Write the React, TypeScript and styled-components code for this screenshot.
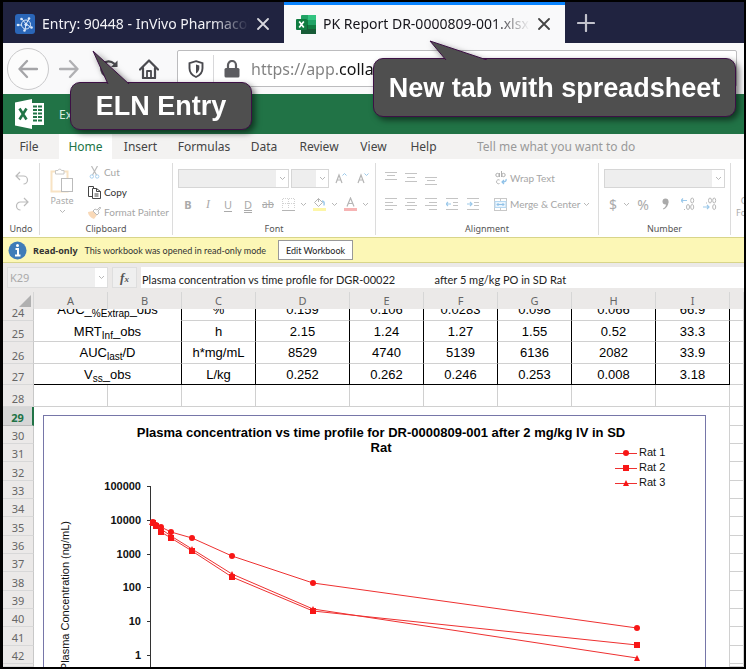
import React from "react";
import styled, { createGlobalStyle, css } from "styled-components";

const UI = '"Noto Sans", "Open Sans", sans-serif';
const NARROW = 'Lato, "Noto Sans", sans-serif';
const ARIAL = '"Liberation Sans", Arial, sans-serif';

const GlobalStyle = createGlobalStyle`
  *, *::before, *::after { box-sizing: border-box; }
  body { margin: 0; background: #000; font-family: ${UI}; }
  button, input { font: inherit; color: inherit; margin: 0; }
  svg { display: block; flex: none; }
`;

const Frame = styled.main`
  position: relative;
  min-height: 100vh;
  border: solid #000;
  border-width: 2px 2px 2px 3px;
  background: #fff;
  overflow: hidden;
`;

const PlainButton = styled.button`
  display: flex;
  align-items: center;
  justify-content: center;
  padding: 0;
  border: 0;
  background: none;
  flex: none;
`;

/* Browser tabs */
const TabStrip = styled.div`
  display: flex;
  height: 41px;
  background: #202340;
`;

const Tab = styled.div<{ $active?: boolean }>`
  display: flex;
  align-items: center;
  width: 281px;
  flex: none;
  padding: 0 15px 0 12px;
  color: ${(p) => (p.$active ? "#15141a" : "#f2f2f6")};
  background: ${(p) => (p.$active ? "#f9f9fa" : "#202340")};
  border-top: 3px solid ${(p) => (p.$active ? "#0a84ff" : "#202340")};
`;

const TabTitle = styled.span`
  flex: 1;
  min-width: 0;
  margin: 0 8px 0 7px;
  font-size: 14px;
  line-height: 20px;
  white-space: nowrap;
  overflow: hidden;
  mask-image: linear-gradient(90deg, #000 82%, transparent);
`;

const NewTab = styled(PlainButton)`
  width: 42px;
`;

/* Navigation bar */
const NavBar = styled.div`
  display: flex;
  align-items: center;
  height: 51px;
  padding: 0 7px 0 4px;
  background: #f9f9fa;
`;

const BackButton = styled(PlainButton)`
  width: 42px;
  height: 42px;
  border: 1px solid #c9c9cb;
  border-radius: 50%;
  background: #fcfcfc;
`;

const NavButton = styled(PlainButton)`
  width: 40px;
  height: 36px;
`;

const AddressBar = styled.div`
  display: flex;
  flex: 1;
  align-items: center;
  height: 37px;
  margin-left: 8px;
  border: 1px solid #bcbcbe;
  border-radius: 2px;
  background: #fff;
`;

const ShieldBox = styled.div`
  display: flex;
  justify-content: center;
  width: 36px;
  height: 28px;
  align-items: center;
  border-right: 1px solid #d8d8da;
`;

const AddressInput = styled.input`
  flex: 1;
  min-width: 0;
  margin-left: 11px;
  padding: 0;
  border: 0;
  outline: 0;
  font-size: 16px;
  line-height: 24px;
  color: transparent;
  background: linear-gradient(90deg, #808080 89px, #111 89px);
  background-clip: text;
`;

/* Application header and menu */
const AppHeader = styled.header`
  display: flex;
  align-items: center;
  gap: 14px;
  height: 40px;
  padding-left: 12px;
  background: #217346;
  color: #d9eee1;
  font-size: 12px;
`;

const MenuBar = styled.nav`
  display: flex;
  height: 25px;
  background: #f3f2f1;
`;

const MenuTab = styled.button<{ $w: number; $active?: boolean }>`
  width: ${(p) => p.$w}px;
  flex: none;
  padding: 0;
  border: 0;
  font-size: 12px;
  line-height: 24px;
  white-space: nowrap;
  background: ${(p) => (p.$active ? "#fff" : "transparent")};
  color: ${(p) => (p.$active ? "#217346" : "#444")};
  &:first-child { margin-right: 4px; }
`;

const TellMe = styled.input`
  flex: 1;
  min-width: 0;
  margin-left: 28px;
  padding: 0;
  border: 0;
  background: none;
  font-size: 12px;
  &::placeholder { color: #999; opacity: 1; }
`;

/* Ribbon */
const Ribbon = styled.div`
  display: grid;
  grid-template-columns: 37px 133px 203px 223px 132px 1fr;
  height: 78px;
  padding: 4px 0;
  overflow: hidden;
`;

const Group = styled.section`
  display: flex;
  flex-direction: column;
  border-right: 1px solid #dcdcdc;
  min-width: 0;
  &:last-child { border-right: 0; }
`;

const GroupBody = styled.div<{ $row?: boolean }>`
  display: flex;
  flex-direction: ${(p) => (p.$row ? "row" : "column")};
  height: 60px;
  padding: 4px 0 0 5px;
  gap: ${(p) => (p.$row ? "9px" : "4px")};
`;

const GroupLabel = styled.div`
  font-size: 9px;
  line-height: 12px;
  text-align: center;
  color: #555;
`;

const ToolRow = styled.div<{ $gap?: number }>`
  display: flex;
  align-items: center;
  height: 22px;
  gap: ${(p) => p.$gap ?? 0}px;
`;

const Tool = styled(PlainButton)<{ $w?: number }>`
  width: ${(p) => p.$w ?? 20}px;
  height: 20px;
`;

const UndoTool = styled(Tool)`
  width: 28px;
  height: 26px;
`;

const Money = styled(Tool)`
  font-size: 14px;
  color: #aaa;
`;

const Letter = styled(Tool)<{ $kind?: "b" | "i" | "u" | "d" | "s" }>`
  font-size: 11px;
  color: #aaa;
  ${(p) => p.$kind === "b" && css`font-weight: 700;`}
  ${(p) => p.$kind === "i" && css`font-style: italic; font-family: "Liberation Serif", serif; font-size: 12px;`}
  ${(p) => p.$kind === "u" && css`text-decoration: underline; text-underline-offset: 2px;`}
  ${(p) => p.$kind === "d" && css`text-decoration: underline double; text-underline-offset: 1px;`}
  ${(p) => p.$kind === "s" && css`text-decoration: line-through; font-size: 10px;`}
`;

const LabelTool = styled.button<{ $on?: boolean }>`
  display: flex;
  align-items: center;
  gap: 3px;
  height: 20px;
  padding: 0;
  border: 0;
  background: none;
  font-family: ${NARROW};
  font-size: 10px;
  line-height: 14px;
  white-space: nowrap;
  color: ${(p) => (p.$on ? "#333" : "#a6a6a6")};
`;

const PasteTool = styled.button`
  display: flex;
  flex-direction: column;
  align-items: center;
  width: 34px;
  height: 54px;
  padding: 0;
  border: 0;
  background: none;
  font-size: 9px;
  line-height: 16px;
  color: #aaa;
`;

const CommandList = styled.div`
  display: flex;
  flex-direction: column;
  margin-top: -5px;
`;

const Combo = styled.span<{ $w: number }>`
  display: flex;
  width: ${(p) => p.$w}px;
  height: 19px;
  border: 1px solid #d6d6d6;
  background: #eee;
`;

const ComboInput = styled.input`
  flex: 1;
  min-width: 0;
  padding: 0;
  border: 0;
  background: none;
`;

const ComboArrow = styled(PlainButton)`
  width: 12px;
  background: #fff;
`;

const Spacer = styled.span<{ $w: number }>`
  width: ${(p) => p.$w}px;
  flex: none;
`;

const CutOff = styled.div`
  padding: 32px 0 0 5px;
  font-size: 9px;
  line-height: 12px;
  white-space: nowrap;
  color: #aaa;
`;

/* Read-only notice */
const Notice = styled.div`
  display: flex;
  align-items: center;
  height: 26px;
  padding-left: 5px;
  border: solid #d8d58a;
  border-width: 1px 0;
  background: #fcf7b6;
  font-family: ${NARROW};
  font-size: 9px;
  color: #333;
  white-space: nowrap;
`;

const NoticeTitle = styled.strong`
  margin: 0 7px 0 6px;
  font-family: ${UI};
`;

const EditButton = styled.button`
  width: 75px;
  height: 20px;
  margin-left: 12px;
  padding: 0;
  border: 1px solid #999;
  background: #fff;
  color: #222;
`;

/* Formula bar */
const FormulaBar = styled.div`
  display: flex;
  height: 29px;
  padding: 4px 0 4px 4px;
  gap: 4px;
  background: #ebe9e8;
`;

const NameBox = styled.span`
  display: flex;
  width: 101px;
  border: 1px solid #dedede;
  background: #efefef;
  color: #aaa;
  font-size: 11px;
`;

const NameInput = styled(ComboInput)`
  padding-left: 2px;
`;

const FxButton = styled(PlainButton)`
  width: 25px;
  border: 1px solid #dedede;
  background: #efefef;
  font: italic 700 13px "Liberation Serif", serif;
  color: #555;
  small { font-size: 9px; padding-top: 3px; }
`;

const FormulaInput = styled.input`
  flex: 1;
  min-width: 0;
  padding: 3px 0 0 1px;
  border: 0;
  background: #fff;
  font-family: ${NARROW};
  font-size: 11px;
  color: #222;
`;

/* Sheet */
const Sheet = styled.table`
  width: 100%;
  table-layout: fixed;
  border-collapse: separate;
  border-spacing: 0;
  font-family: ${ARIAL};
  font-size: 13px;
  line-height: 15px;
  color: #000;
  td, th { padding: 0; overflow: hidden; white-space: nowrap; }
`;

const Row = styled.tr<{ $h: number }>`
  height: ${(p) => p.$h}px;
`;

const ColHead = styled.th`
  border-right: 1px solid #d6d6d6;
  background: #ebe9e8;
  font-family: ${UI};
  font-size: 11px;
  font-weight: 400;
  color: #666;
`;

const RowHead = styled.th<{ $active?: boolean }>`
  vertical-align: bottom;
  border-right: ${(p) => (p.$active ? "2px solid #217346" : "1px solid #c8c8c8")};
  border-bottom: 1px solid ${(p) => (p.$active ? "#bbb" : "#d8d8d8")};
  background: ${(p) => (p.$active ? "#d6d6d6" : "#ebe9e8")};
  color: ${(p) => (p.$active ? "#217346" : "#666")};
  font-family: ${UI};
  font-size: 11px;
  line-height: 14px;
  font-weight: ${(p) => (p.$active ? 700 : 400)};
`;

const Cell = styled.td<{ $data?: boolean; $last?: boolean; $open?: boolean }>`
  text-align: center;
  border-right: 1px solid ${(p) => (p.$data ? "#000" : "#d0d0d0")};
  border-bottom: 1px solid ${(p) => (p.$last ? "#000" : p.$open ? "#fff" : "#d0d0d0")};
`;

const Clip = styled.div<{ $lift?: boolean }>`
  display: flex;
  align-items: flex-end;
  justify-content: center;
  height: 11px;
  padding-bottom: ${(p) => (p.$lift ? "3px" : 0)};
  overflow: hidden;
`;

const CellText = styled.span`
  display: block;
  sub { font-size: 10px; line-height: 0; vertical-align: -3px; }
`;

const ChartCell = styled.td`
  && { padding: 8px 23px 0 9px; }
  vertical-align: top;
  border-right: 1px solid #d0d0d0;
`;

const ChartFrame = styled.div`
  border: solid #7676a8;
  border-width: 1px 1px 0;
  overflow: hidden;
`;

/* Callouts lie over the browser and the ribbon */
const Callout = styled.aside<{ $x: number; $y: number; $w: number; $h: number }>`
  position: absolute;
  left: ${(p) => p.$x}px;
  top: ${(p) => p.$y}px;
  width: ${(p) => p.$w}px;
  height: ${(p) => p.$h}px;
  display: flex;
  align-items: center;
  justify-content: center;
  border: 1px solid #3d1045;
  border-radius: 10px;
  background: #4f4f4f;
  color: #fff;
  font-family: ${ARIAL};
  font-weight: 700;
  font-size: 27px;
  line-height: 32px;
  white-space: nowrap;
  filter: drop-shadow(3px 3px 3px rgba(0, 0, 0, 0.55));
`;

const Tail = styled.svg<{ $x: number }>`
  position: absolute;
  left: ${(p) => p.$x}px;
  bottom: calc(100% - 1px);
`;

const Chevron = () => (
  <svg width="7" height="5" viewBox="0 0 7 5" fill="none" stroke="#b8b8b8">
    <path d="M1 1l2.5 2.5L6 1" />
  </svg>
);

const ElnIcon = () => (
  <svg width="20" height="20" viewBox="0 0 20 20">
    <rect width="20" height="20" rx="3" fill="#2a66b8" />
    <g fill="none" stroke="#dce9fb" strokeWidth="1">
      <circle cx="11" cy="10.500" r="4.500" />
      <circle cx="11" cy="10.500" r="1.200" fill="#dce9fb" />
      <path d="M4 11h3M11 10L7 5M11 10l3-5M11 10l4.500 3M11 10l-1 6" />
    </g>
    <g fill="#dce9fb">
      <circle cx="3" cy="11" r="1.300" /><circle cx="6.500" cy="5" r="1.300" />
      <circle cx="14" cy="4.500" r="1.300" /><circle cx="16.500" cy="13.500" r="1.300" /><circle cx="9.500" cy="16.500" r="1.300" />
    </g>
  </svg>
);

const XlsxIcon = () => (
  <svg width="20" height="19" viewBox="0 0 20 19">
    <rect x="5" y="0" width="15" height="19" rx="1" fill="#21a366" />
    <rect x="12" y="0" width="8" height="5" fill="#33c481" />
    <rect x="5" y="5" width="7" height="5" fill="#107c41" />
    <rect x="5" y="10" width="15" height="9" fill="#185c37" />
    <rect x="12" y="10" width="8" height="4" fill="#107c41" />
    <rect x="0" y="4" width="11" height="11" rx="1" fill="#107c41" />
    <path d="M3.200 6.500l4.600 6M7.800 6.500l-4.600 6" stroke="#fff" strokeWidth="1.700" />
  </svg>
);

const Close = ({ color }: { color: string }) => (
  <svg width="12" height="12" viewBox="0 0 12 12" stroke={color} strokeWidth="1.800" strokeLinecap="round">
    <path d="M1 1l10 10M11 1L1 11" />
  </svg>
);

const Arrow = ({ color, back }: { color: string; back?: boolean }) => (
  <svg width="20" height="20" viewBox="0 0 20 20" fill="none" stroke={color} strokeWidth="2.300" strokeLinecap="round" strokeLinejoin="round">
    <path d={back ? "M19 10H1.500M9 2L1.500 10l7.500 8" : "M1 10h17.500M11 2l7.500 8-7.500 8"} />
  </svg>
);

const Reload = () => (
  <svg width="20" height="20" viewBox="0 0 20 20" fill="none" stroke="#4a4a4f" strokeWidth="2.200">
    <path d="M16.500 13A7.500 7.500 0 1 1 15 4.500L17.500 7" />
    <path d="M18.500 1.500v6.500h-6.500z" fill="#4a4a4f" stroke="none" />
  </svg>
);

const HomeIcon = () => (
  <svg width="20" height="20" viewBox="0 0 20 20" fill="none" stroke="#4a4a4f" strokeWidth="2.200" strokeLinejoin="round" strokeLinecap="round">
    <path d="M1 10.500L10 1.500l9 9M4 9v10h12V9" />
    <path d="M8 18.500V12h4v6.500" strokeWidth="1.800" />
  </svg>
);

const Shield = () => (
  <svg width="16" height="18" viewBox="0 0 16 18">
    <path d="M8 1.200l6.500 2v5c0 4-2.500 7-6.500 8.800C4 15.200 1.500 12.200 1.500 8.200v-5z" fill="none" stroke="#4a4a4f" strokeWidth="1.900" />
    <path d="M8 4.500v9c2.200-1.300 3.300-3.200 3.300-5.500V5.400z" fill="#4a4a4f" />
  </svg>
);

const Lock = () => (
  <svg width="16" height="18" viewBox="0 0 16 18">
    <rect x="0.500" y="8" width="15" height="9.500" rx="1.500" fill="#5c5c60" />
    <path d="M4 8V5a4 4 0 0 1 8 0v3" fill="none" stroke="#5c5c60" strokeWidth="2.200" />
  </svg>
);

const ExcelLogo = () => (
  <svg width="30" height="30" viewBox="0 0 30 30">
    <path d="M16 4h13v22H16z" fill="#fff" />
    <path d="M18 7.500h9M18 11h9M18 14.500h9M18 18h9M18 21.500h9" stroke="#217346" strokeWidth="2" />
    <path d="M22.500 5v20" stroke="#fff" strokeWidth="1" />
    <path d="M0 3.500L17 0v30L0 26.500z" fill="#fff" />
    <path d="M4.500 9.500l7 11M11.500 9.500l-7 11" stroke="#217346" strokeWidth="2.600" />
  </svg>
);

const UndoIcon = ({ redo }: { redo?: boolean }) => (
  <svg width="14" height="14" viewBox="0 0 14 14" fill="none" stroke="#bbb" strokeWidth="1.200">
    <path d={redo ? "M9 1l4 4-4 4M13 5H5.500a4 4 0 0 0 0 8" : "M5 1L1 5l4 4M1 5h7.500a4 4 0 0 1 0 8"} />
  </svg>
);

const PasteIcon = () => (
  <svg width="24" height="26" viewBox="0 0 24 26" fill="none">
    <rect x="1.500" y="4.500" width="16" height="20" stroke="#f8e3c4" strokeWidth="2" />
    <path d="M5.500 7V3.500H8a1.800 1.800 0 0 1 3.500 0H14V7z" fill="#fff" stroke="#c8c8c8" />
    <rect x="11.500" y="11.500" width="11" height="13" fill="#fff" stroke="#bbb" />
  </svg>
);

const CutIcon = () => (
  <svg width="13" height="13" viewBox="0 0 13 13" fill="none">
    <path d="M3.500 0l5 9M9.500 0l-5 9" stroke="#bbb" strokeWidth="1.200" />
    <circle cx="3.800" cy="10.500" r="1.700" stroke="#a9d0ee" />
    <circle cx="9.200" cy="10.500" r="1.700" stroke="#a9d0ee" />
  </svg>
);

const CopyIcon = () => (
  <svg width="13" height="13" viewBox="0 0 13 13" fill="none" stroke="#444">
    <path d="M4.500 10.500h-4V.5h5v2M4.500 2.500h4l4 3v7h-8zM8.500 2.500v3h4M6.500 8h4M6.500 10h4" />
  </svg>
);

const PainterIcon = () => (
  <svg width="13" height="13" viewBox="0 0 13 13">
    <path d="M0 6l5-1 4 4-3 4C3 12 0 9 0 6z" fill="#f9d9b8" />
    <path d="M5 5l2-2 2 1 3-3 .8.800L10 5l1 2-2 2z" fill="#fff" stroke="#bbb" />
  </svg>
);

const SizeIcon = ({ down }: { down?: boolean }) => (
  <svg width="12" height="13" viewBox="0 0 12 13" fill="none">
    <path d="M1 11l3-8 3 8M2 8h4" stroke="#b5b5b5" strokeWidth="1.200" />
    <path d={down ? "M7.500 1.500l2 2 2-2" : "M7.500 3.500l2-2 2 2"} stroke="#9cc9ea" />
  </svg>
);

const BorderIcon = () => (
  <svg width="13" height="13" viewBox="0 0 13 13" fill="none" stroke="#d2d2d2">
    <path d="M.5 1v10M6.500 1v10M12.500 1v10M1 .5h11M1 5.500h11" strokeDasharray="1 1" />
    <path d="M0 12.500h13" stroke="#b5b5b5" />
  </svg>
);

const FillIcon = () => (
  <svg width="13" height="14" viewBox="0 0 13 14" fill="none">
    <path d="M5.500 1.500l4 4-4 4-4-4zM5.500 1.500V5" stroke="#b5b5b5" />
    <path d="M9 4c2 0 2.500 1.500 2 4.500" stroke="#9cc9ea" strokeWidth="1.500" />
    <path d="M0 11h13v3H0z" fill="#fdf6a8" />
  </svg>
);

const FontColorIcon = () => (
  <svg width="13" height="14" viewBox="0 0 13 14" fill="none">
    <path d="M3 9.500L6.500 1 10 9.500M4.200 6.500h4.600" stroke="#b5b5b5" strokeWidth="1.200" />
    <path d="M0 11h13v3H0z" fill="#f6b4b4" />
  </svg>
);

const lineSets: Record<string, string> = {
  top: "M0 1.500h12M2 4.500h8M0 8.500h12",
  middle: "M0 2.500h12M2 6.500h8M0 10.500h12",
  bottom: "M0 6.500h12M2 9.500h8M0 13.500h12",
  left: "M0 1.500h12M0 5.500h8M0 8.500h12M0 12.500h8",
  center: "M0 1.500h12M2 5.500h8M0 8.500h12M2 12.500h8",
  right: "M0 1.500h12M4 5.500h8M0 8.500h12M4 12.500h8",
};

const Lines = ({ kind }: { kind: string }) => (
  <svg width="12" height="14" viewBox="0 0 12 14" stroke="#c4c4c4">
    <path d={lineSets[kind]} />
  </svg>
);

const Indent = ({ right }: { right?: boolean }) => (
  <svg width="12" height="14" viewBox="0 0 12 14" fill="none" stroke="#c4c4c4">
    <path d="M0 1.500h12M7 5.500h5M7 8.500h5M0 12.500h12" />
    <path d={right ? "M0 7h5M3 5l2 2-2 2" : "M0 7h5M2 5L0 7l2 2"} stroke="#9cc9ea" strokeWidth="1.200" />
  </svg>
);

const WrapIcon = () => (
  <svg width="12" height="14" viewBox="0 0 12 14" fill="none" stroke="#b0b0b0">
    <circle cx="2.500" cy="4" r="1.700" /><path d="M4.500 2v4M6.500 0v6" />
    <circle cx="8.500" cy="4" r="1.700" /><path d="M4.500 9a2 2 0 1 0 0 3.500" />
    <path d="M11 8c.5 2-.5 3-4 3M9 9l-2 2 2 2" stroke="#8fc1e8" strokeWidth="1.200" />
  </svg>
);

const MergeIcon = () => (
  <svg width="13" height="13" viewBox="0 0 13 13" fill="none">
    <rect x=".5" y=".5" width="12" height="12" stroke="#c8c8c8" />
    <path d="M6.500 0v3M6.500 10v3" stroke="#c8c8c8" />
    <rect x="1" y="3.500" width="11" height="6" fill="#eaf4fc" stroke="#b5d8f2" />
    <path d="M3 6.500h7M4.500 5L3 6.500 4.500 8M8.500 5L10 6.500 8.500 8" stroke="#8fc1e8" />
  </svg>
);

const DecimalIcon = ({ less }: { less?: boolean }) => (
  <svg width="14" height="14" viewBox="0 0 14 14" fill="none" stroke="#b8b8b8">
    <ellipse cx="11.200" cy={less ? 10 : 3.5} rx="1.500" ry="2.500" />
    <ellipse cx="7" cy={less ? 3.5 : 10} rx="1.500" ry="2.500" />
    <ellipse cx="11.200" cy={less ? 3.5 : 10} rx="1.500" ry="2.500" />
    <path d={less ? "M3.500 5.500v1" : "M3.500 12v1"} />
    <path d={less ? "M0 10h6M4 8l2 2-2 2" : "M0 3.500h6M2 1.500l-2 2 2 2"} stroke="#9cc9ea" strokeWidth="1.200" />
  </svg>
);

const InfoIcon = () => (
  <svg width="19" height="19" viewBox="0 0 19 19">
    <circle cx="9.500" cy="9.500" r="9" fill="#3f7cb8" />
    <circle cx="9.500" cy="4.500" r="1.500" fill="#fff" />
    <path d="M7.500 8h2.500v6.500M7 14.500h5.500" stroke="#fff" strokeWidth="2" fill="none" />
  </svg>
);

const columns = ["A", "B", "C", "D", "E", "F", "G", "H", "I"];
const widths = [74, 74, 74, 94, 74, 74, 74, 84, 74];

const results: { row: number; h: number; name: React.ReactNode; values: string[] }[] = [
  { row: 24, h: 12, name: <>AUC_<sub>%Extrap</sub>_obs</>, values: ["%", "0.159", "0.106", "0.0283", "0.098", "0.066", "66.9"] },
  { row: 25, h: 21, name: <>MRT<sub>Inf</sub>_obs</>, values: ["h", "2.15", "1.24", "1.27", "1.55", "0.52", "33.3"] },
  { row: 26, h: 22, name: <>AUC<sub>last</sub>/D</>, values: ["h*mg/mL", "8529", "4740", "5139", "6136", "2082", "33.9"] },
  { row: 27, h: 21, name: <>V<sub>ss</sub>_obs</>, values: ["L/kg", "0.252", "0.262", "0.246", "0.253", "0.008", "3.18"] },
];

const lowerRows = [19, 18, 18, 19, 18, 18, 19, 18, 18, 19, 18, 18, 19, 18];

type Point = [number, number];
const rat1: Point[] = [[109, 106], [112, 109], [117, 111], [127, 116], [148, 122], [188, 140], [269, 167], [593, 212]];
const rat2: Point[] = [[109, 107], [112, 110], [117, 116], [127, 122], [148, 135], [188, 161], [269, 195], [593, 229]];
const rat3: Point[] = [[108, 106], [112, 109], [117, 113], [127, 120], [148, 133], [188, 158], [269, 193], [593, 242]];

const Marker = ({ kind, x, y }: { kind: number; x: number; y: number }) =>
  kind === 0 ? <circle cx={x} cy={y} r="3" /> :
  kind === 1 ? <rect x={x - 3} y={y - 3} width="6" height="6" /> :
  <path d={`M${x} ${y - 3}l3 6h-6z`} />;

const Chart = () => (
  <svg width="100%" height="251" viewBox="0 0 661 251" preserveAspectRatio="xMinYMin meet" fontFamily={ARIAL} fontSize="11">
    <g fontSize="13" fontWeight="700" textAnchor="middle">
      <text x="337" y="21">Plasma concentration vs time profile for DR-0000809-001 after 2 mg/kg IV in SD</text>
      <text x="337" y="36">Rat</text>
    </g>
    <g stroke="#333">
      <path d="M106.500 70v181" />
      {[70, 104, 138, 171, 205, 239].map((y) => <path key={y} d={`M103 ${y + 0.5}h4`} />)}
    </g>
    <g textAnchor="end" fill="#111">
      <g fontWeight="700">
        {["100000", "10000", "1000", "100", "10", "1"].map((t, i) => (
          <text key={t} x="97" y={[74, 108, 142, 175, 209, 243][i]}>{t}</text>
        ))}
      </g>
      <text transform="translate(25 105) rotate(-90)">Plasma Concentration (ng/mL)</text>
    </g>
    {[rat1, rat2, rat3].map((points, kind) => (
      <g key={kind} fill="#f81616">
        <polyline points={points.map((p) => p.join(",")).join(" ")} fill="none" stroke="#ee3030" />
        {points.map(([x, y]) => <Marker key={x} kind={kind} x={x} y={y} />)}
        <path d={`M571 ${37.5 + kind * 15}h22`} stroke="#ee3030" />
        <Marker kind={kind} x={582} y={37 + kind * 15} />
        <text x="595" y={40 + kind * 15} fill="#111">{`Rat ${kind + 1}`}</text>
      </g>
    ))}
  </svg>
);

const menus: [string, number][] = [["File", 52], ["Home", 53], ["Insert", 57], ["Formulas", 70], ["Data", 50], ["Review", 60], ["View", 49], ["Help", 51]];

const gap = "\u00a0".repeat(14);

export default function App() {
  return (
    <Frame>
      <GlobalStyle />
      <TabStrip>
        <Tab>
          <ElnIcon />
          <TabTitle>Entry: 90448 - InVivo Pharmacology</TabTitle>
          <PlainButton aria-label="Close tab"><Close color="#d8d8de" /></PlainButton>
        </Tab>
        <Tab $active>
          <XlsxIcon />
          <TabTitle>PK Report DR-0000809-001.xlsx</TabTitle>
          <PlainButton aria-label="Close tab"><Close color="#444" /></PlainButton>
        </Tab>
        <NewTab aria-label="New tab">
          <svg width="18" height="18" viewBox="0 0 18 18" stroke="#c2c2cc" strokeWidth="2.200" strokeLinecap="round">
            <path d="M9 1v16M1 9h16" />
          </svg>
        </NewTab>
      </TabStrip>

      <NavBar>
        <BackButton aria-label="Back"><Arrow back color="#a5a5a8" /></BackButton>
        <NavButton aria-label="Forward"><Arrow color="#b0b0b3" /></NavButton>
        <NavButton aria-label="Reload"><Reload /></NavButton>
        <NavButton aria-label="Home"><HomeIcon /></NavButton>
        <AddressBar>
          <ShieldBox><Shield /></ShieldBox>
          <Spacer $w={10} />
          <Lock />
          <AddressInput aria-label="Address" defaultValue="https://app.colla" />
        </AddressBar>
      </NavBar>

      <AppHeader><ExcelLogo /><span>Excel</span></AppHeader>

      <MenuBar>
        {menus.map(([name, w]) => (
          <MenuTab key={name} $w={w} $active={name === "Home"}>{name}</MenuTab>
        ))}
        <TellMe aria-label="Tell me what you want to do" placeholder="Tell me what you want to do" />
      </MenuBar>

      <Ribbon>
        <Group>
          <GroupBody>
            <ToolRow><UndoTool aria-label="Undo"><UndoIcon /></UndoTool></ToolRow>
            <ToolRow><UndoTool aria-label="Redo"><UndoIcon redo /></UndoTool></ToolRow>
          </GroupBody>
          <GroupLabel>Undo</GroupLabel>
        </Group>
        <Group>
          <GroupBody $row>
            <PasteTool><PasteIcon /><span>Paste</span><Chevron /></PasteTool>
            <CommandList>
              <LabelTool><CutIcon />Cut</LabelTool>
              <LabelTool $on><CopyIcon />Copy</LabelTool>
              <LabelTool><PainterIcon />Format Painter</LabelTool>
            </CommandList>
          </GroupBody>
          <GroupLabel>Clipboard</GroupLabel>
        </Group>
        <Group>
          <GroupBody>
            <ToolRow $gap={2}>
              <Combo $w={111}><ComboInput aria-label="Font" /><ComboArrow aria-label="Font list"><Chevron /></ComboArrow></Combo>
              <Combo $w={38}><ComboInput aria-label="Font size" /><ComboArrow aria-label="Size list"><Chevron /></ComboArrow></Combo>
              <Tool aria-label="Increase font size"><SizeIcon /></Tool>
              <Tool aria-label="Decrease font size"><SizeIcon down /></Tool>
            </ToolRow>
            <ToolRow>
              <Letter $kind="b">B</Letter>
              <Letter $kind="i">I</Letter>
              <Letter $kind="u">U</Letter>
              <Letter $kind="d">D</Letter>
              <Letter $kind="s">ab</Letter>
              <Tool aria-label="Borders"><BorderIcon /></Tool>
              <Tool $w={11} aria-label="Border styles"><Chevron /></Tool>
              <Tool aria-label="Fill color"><FillIcon /></Tool>
              <Tool $w={11} aria-label="Fill colors"><Chevron /></Tool>
              <Tool aria-label="Font color"><FontColorIcon /></Tool>
              <Tool $w={11} aria-label="Font colors"><Chevron /></Tool>
            </ToolRow>
          </GroupBody>
          <GroupLabel>Font</GroupLabel>
        </Group>
        <Group>
          <GroupBody>
            <ToolRow>
              <Tool aria-label="Top align"><Lines kind="top" /></Tool>
              <Tool aria-label="Middle align"><Lines kind="middle" /></Tool>
              <Tool aria-label="Bottom align"><Lines kind="bottom" /></Tool>
              <Spacer $w={54} />
              <LabelTool><WrapIcon />Wrap Text</LabelTool>
            </ToolRow>
            <ToolRow>
              <Tool aria-label="Align left"><Lines kind="left" /></Tool>
              <Tool aria-label="Center"><Lines kind="center" /></Tool>
              <Tool aria-label="Align right"><Lines kind="right" /></Tool>
              <Tool $w={22} aria-label="Decrease indent"><Indent /></Tool>
              <Tool aria-label="Increase indent"><Indent right /></Tool>
              <Spacer $w={11} />
              <LabelTool><MergeIcon />Merge &amp; Center<Chevron /></LabelTool>
            </ToolRow>
          </GroupBody>
          <GroupLabel>Alignment</GroupLabel>
        </Group>
        <Group>
          <GroupBody>
            <ToolRow>
              <Combo $w={121}><ComboInput aria-label="Number format" /><ComboArrow aria-label="Format list"><Chevron /></ComboArrow></Combo>
            </ToolRow>
            <ToolRow>
              <Money $w={18} aria-label="Accounting format">$</Money>
              <Tool $w={9} aria-label="Currencies"><Chevron /></Tool>
              <Money $w={24} aria-label="Percent">%</Money>
              <Money $w={20} aria-label="Comma">
                <svg width="7" height="12" viewBox="0 0 7 12" fill="#aaa">
                  <circle cx="3.500" cy="3.500" r="3" /><path d="M6.500 3.500c0 4-2 6.500-5 8L1 10.500c2-1 3-2.500 3-4.500z" />
                </svg>
              </Money>
              <Tool $w={25} aria-label="Increase decimal"><DecimalIcon /></Tool>
              <Tool aria-label="Decrease decimal"><DecimalIcon less /></Tool>
            </ToolRow>
          </GroupBody>
          <GroupLabel>Number</GroupLabel>
        </Group>
        <Group>
          <CutOff>&nbsp;&nbsp;Conditional<br />Formatting</CutOff>
        </Group>
      </Ribbon>

      <Notice role="status">
        <InfoIcon />
        <NoticeTitle>Read-only</NoticeTitle>
        <span>This workbook was opened in read-only mode</span>
        <EditButton>Edit Workbook</EditButton>
      </Notice>

      <FormulaBar>
        <NameBox>
          <NameInput aria-label="Name box" defaultValue="K29" />
          <ComboArrow aria-label="Names"><Chevron /></ComboArrow>
        </NameBox>
        <FxButton aria-label="Insert function">f<small>x</small></FxButton>
        <FormulaInput aria-label="Formula" defaultValue={`Plasma concentration vs time profile for DGR-00022${gap}after 5 mg/kg PO in SD Rat`} />
      </FormulaBar>

      <Sheet>
        <colgroup>
          <col width={31} />
          {widths.map((w, i) => <col key={i} width={w} />)}
          <col />
        </colgroup>
        <thead>
          <Row $h={17}>
            <ColHead aria-label="Select all">
              <svg width="29" height="14" viewBox="0 0 29 14"><path d="M28 1v12H16z" fill="#b0b0b0" /></svg>
            </ColHead>
            {columns.map((c) => <ColHead key={c} scope="col">{c}</ColHead>)}
            <ColHead />
          </Row>
        </thead>
        <tbody>
          {results.map(({ row, h, name, values }) => {
            const wrap = (v: React.ReactNode) =>
              row === 24 ? <Clip $lift><CellText>{v}</CellText></Clip> : <CellText>{v}</CellText>;
            return (
              <Row key={row} $h={h}>
                <RowHead scope="row">{row === 24 ? <Clip>{row}</Clip> : row}</RowHead>
                <Cell colSpan={2} $data $open={row === 24} $last={row === 27}>{wrap(name)}</Cell>
                {values.map((v, i) => <Cell key={i} $data $last={row === 27}>{wrap(v)}</Cell>)}
                <Cell />
              </Row>
            );
          })}
          <Row $h={22}>
            <RowHead scope="row">28</RowHead>
            {columns.map((c) => <Cell key={c} />)}
            <Cell />
          </Row>
          {lowerRows.map((h, i) => (
            <Row key={i} $h={h}>
              <RowHead scope="row" $active={i === 0}>{29 + i}</RowHead>
              {i === 0 && (
                <ChartCell colSpan={9} rowSpan={15}><ChartFrame><Chart /></ChartFrame></ChartCell>
              )}
              <Cell />
            </Row>
          ))}
          <Row $h={3}>
            <RowHead aria-label="43" />
            <Cell />
          </Row>
        </tbody>
      </Sheet>

      <Callout $x={67} $y={80} $w={182} $h={48}>
        <Tail $x={21} width="38" height="34" viewBox="0 0 38 34">
          <path d="M16 34L1 1l36 33" fill="#4f4f4f" stroke="#3d1045" />
        </Tail>
        ELN Entry
      </Callout>
      <Callout $x={370} $y={56} $w={363} $h={59}>
        <Tail $x={55} width="60" height="20" viewBox="0 0 60 20">
          <path d="M17 20L1 1l57 19" fill="#4f4f4f" stroke="#3d1045" />
        </Tail>
        New tab with spreadsheet
      </Callout>
    </Frame>
  );
}
